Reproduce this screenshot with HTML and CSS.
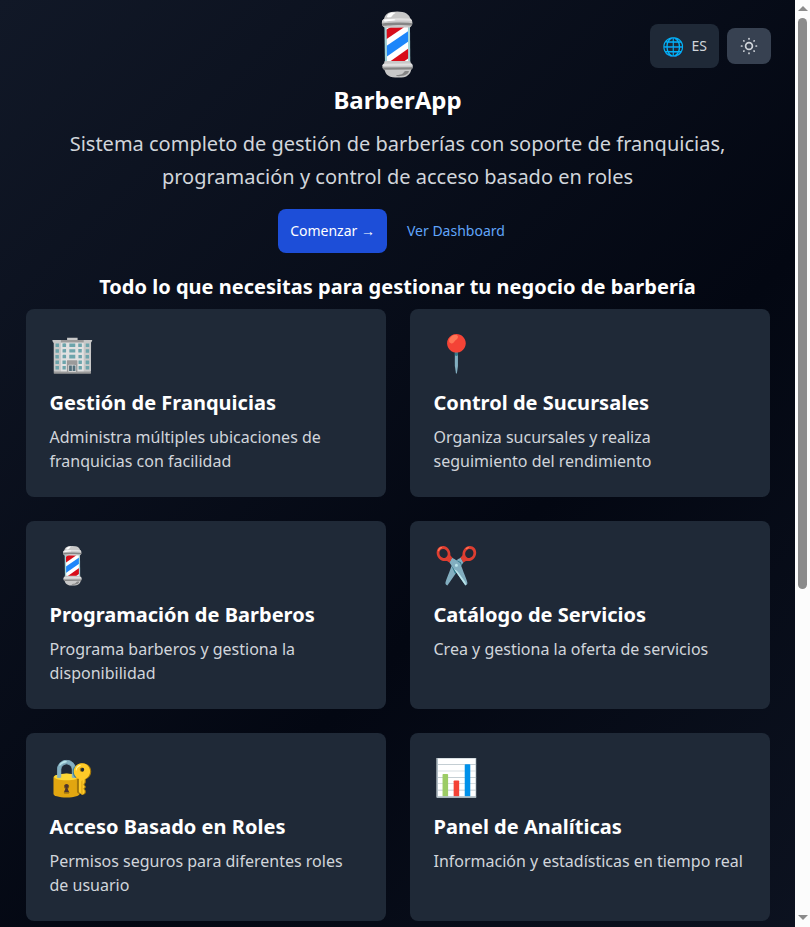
FILE: index.html
```html
<!DOCTYPE html>
<html lang="es">
<head><meta charset="utf-8"><title>BarberApp</title><link rel="stylesheet" href="styles.css"></head>
<body>
<div class="viewport">
<div class="page">
  <div class="toolbar">
    <button class="language"><span class="globe">🌐</span><span>ES</span></button>
    <button class="theme" aria-label="Tema"><svg width="20" height="20" viewBox="0 0 20 20" fill="none" stroke="currentColor" stroke-width="1.7" stroke-linecap="round"><circle cx="10" cy="10" r="3.4"/><path d="M10 2.5v.4M10 17.1v.4M2.5 10h.4M17.1 10h.4M4.8 4.8l.2.2M15 15l.2.2M4.8 15.2l.2-.2M15 5l.2-.2"/></svg></button>
  </div>
  <header class="hero">
    <div class="logo">💈</div>
    <h1>BarberApp</h1>
    <p class="tagline">Sistema completo de gestión de barberías con soporte de franquicias,<br>programación y control de acceso basado en roles</p>
    <div class="actions"><a class="primary">Comenzar →</a><a class="secondary">Ver Dashboard</a></div>
  </header>
  <h2>Todo lo que necesitas para gestionar tu negocio de barbería</h2>
  <main class="grid">
    <article class="card"><div class="icon">🏢</div><h3>Gestión de Franquicias</h3><p>Administra múltiples ubicaciones de franquicias con facilidad</p></article>
    <article class="card"><div class="icon">📍</div><h3>Control de Sucursales</h3><p>Organiza sucursales y realiza seguimiento del rendimiento</p></article>
    <article class="card"><div class="icon">💈</div><h3>Programación de Barberos</h3><p>Programa barberos y gestiona la disponibilidad</p></article>
    <article class="card"><div class="icon">✂️</div><h3>Catálogo de Servicios</h3><p>Crea y gestiona la oferta de servicios</p></article>
    <article class="card"><div class="icon">🔐</div><h3>Acceso Basado en Roles</h3><p>Permisos seguros para diferentes roles de usuario</p></article>
    <article class="card"><div class="icon">📊</div><h3>Panel de Analíticas</h3><p>Información y estadísticas en tiempo real</p></article>
  </main>
</div>
<div class="scrollbar"><i class="up"></i><i class="thumb"></i><i class="down"></i></div>
</div>
</body>
</html>
```
FILE: styles.css
```css
* { box-sizing: border-box; }
body { margin: 0; font-family: "Noto Sans", sans-serif; }
h1, h2, h3, p { margin: 0; }
h2, h3 { letter-spacing: 0.02px; }
.viewport { display: flex; width: 810px; height: 927px; overflow: hidden; }
.page { position: relative; width: 795px; height: 927px; background: linear-gradient(135deg, #111827, #030712 50%, #111827) 0 0 / 795px 1300px no-repeat; color: #fff; }
.toolbar { position: absolute; top: 24px; right: 24px; display: flex; align-items: center; gap: 8px; }
button { border: 0; font: 14px/20px "Noto Sans", sans-serif; color: #d1d5db; display: flex; align-items: center; justify-content: center; border-radius: 8px; padding: 0; }
.language { width: 69px; height: 44px; gap: 7.6px; background: #1f2937; }
.globe { font-size: 18px; line-height: 28px; }
.theme { width: 44px; height: 36px; background: #374151; }
.hero { padding-top: 12px; text-align: center; }
.logo { font-size: 60px; line-height: 60px; height: 60px; margin-bottom: 12px; }
h1 { font-size: 24px; line-height: 32px; }
.tagline { margin-top: 12px; font-size: 20px; line-height: 32.5px; color: #d1d5db; }
.actions { display: flex; justify-content: center; gap: 8px; margin-top: 16px; }
.actions a { height: 44px; padding: 0 12px; border-radius: 8px; font-size: 14px; line-height: 44px; }
.primary { background: #1d4ed8; color: #fff; }
.secondary { color: #60a5fa; }
h2 { margin-top: 20px; font-size: 20px; line-height: 28px; text-align: center; }
.grid { display: grid; grid-template-columns: 360px 360px; gap: 24px; margin: 8px 0 0 25.5px; }
.card { height: 188px; padding: 24px; border-radius: 8px; background: #1f2937; }
.icon { font-size: 36px; line-height: 40px; height: 40px; margin-bottom: 16px; }
h3 { font-size: 20px; line-height: 28px; margin-bottom: 8px; }
.card p { font-size: 16px; line-height: 24px; color: #d1d5db; }
.scrollbar { width: 15px; height: 927px; background: #fcfcfc; display: flex; flex-direction: column; align-items: center; }
.scrollbar i { display: block; }
.up, .down { border: 5px solid transparent; border-top: 0; border-bottom: 5px solid #8b8b8b; }
.up { margin: 6px 0 7px; }
.thumb { width: 9px; height: 571px; border-radius: 5px; background: #8b8b8b; }
.down { margin: auto 0 7px; transform: rotate(180deg); }
```
